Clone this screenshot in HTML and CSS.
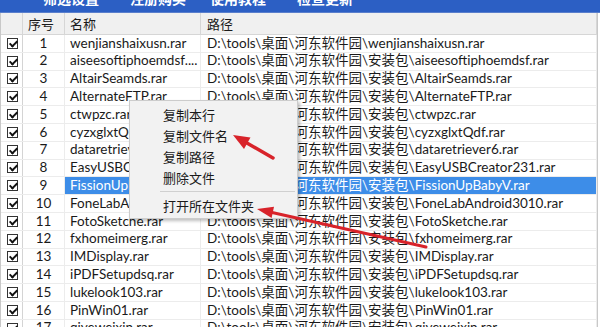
FILE: index.html
```html
<!DOCTYPE html>
<html lang="zh-CN">
<head>
  <meta charset="UTF-8" />
  <title>文件列表</title>
  <link rel="stylesheet" href="styles.css">
</head>
<body>
  <div class="topbar">
    <span class="nav nav-1">筛选设置</span>
    <span class="nav nav-2">注册购买</span>
    <span class="nav nav-3">使用教程</span>
    <span class="nav nav-4">检查更新</span>
  </div>

  <div class="list">
    <div class="row head">
      <div class="c-check"></div>
      <div class="c-num">序号</div>
      <div class="c-name">名称</div>
      <div class="c-path">路径</div>
    </div>

    <div class="row"><div class="c-check"><span class="cb"></span></div><div class="c-num">1</div><div class="c-name">wenjianshaixusn.rar</div><div class="c-path">D:\tools\桌面\河东软件园\wenjianshaixusn.rar</div></div>
    <div class="row"><div class="c-check"><span class="cb"></span></div><div class="c-num">2</div><div class="c-name">aiseesoftiphoemdsf....</div><div class="c-path">D:\tools\桌面\河东软件园\安装包\aiseesoftiphoemdsf.rar</div></div>
    <div class="row"><div class="c-check"><span class="cb"></span></div><div class="c-num">3</div><div class="c-name">AltairSeamds.rar</div><div class="c-path">D:\tools\桌面\河东软件园\安装包\AltairSeamds.rar</div></div>
    <div class="row"><div class="c-check"><span class="cb"></span></div><div class="c-num">4</div><div class="c-name">AlternateFTP.rar</div><div class="c-path">D:\tools\桌面\河东软件园\安装包\AlternateFTP.rar</div></div>
    <div class="row"><div class="c-check"><span class="cb"></span></div><div class="c-num">5</div><div class="c-name">ctwpzc.rar</div><div class="c-path">D:\tools\桌面\河东软件园\安装包\ctwpzc.rar</div></div>
    <div class="row"><div class="c-check"><span class="cb"></span></div><div class="c-num">6</div><div class="c-name">cyzxglxtQdf.rar</div><div class="c-path">D:\tools\桌面\河东软件园\安装包\cyzxglxtQdf.rar</div></div>
    <div class="row"><div class="c-check"><span class="cb"></span></div><div class="c-num">7</div><div class="c-name">dataretriever6.rar</div><div class="c-path">D:\tools\桌面\河东软件园\安装包\dataretriever6.rar</div></div>
    <div class="row"><div class="c-check"><span class="cb"></span></div><div class="c-num">8</div><div class="c-name">EasyUSBCreator231.rar</div><div class="c-path">D:\tools\桌面\河东软件园\安装包\EasyUSBCreator231.rar</div></div>
    <div class="row selected"><div class="c-check"><span class="cb"></span></div><div class="c-num">9</div><div class="c-name">FissionUpBabyV.rar</div><div class="c-path">D:\tools\桌面\河东软件园\安装包\FissionUpBabyV.rar</div></div>
    <div class="row"><div class="c-check"><span class="cb"></span></div><div class="c-num">10</div><div class="c-name">FoneLabAndroid3010.rar</div><div class="c-path">D:\tools\桌面\河东软件园\安装包\FoneLabAndroid3010.rar</div></div>
    <div class="row"><div class="c-check"><span class="cb"></span></div><div class="c-num">11</div><div class="c-name">FotoSketche.rar</div><div class="c-path">D:\tools\桌面\河东软件园\安装包\FotoSketche.rar</div></div>
    <div class="row"><div class="c-check"><span class="cb"></span></div><div class="c-num">12</div><div class="c-name">fxhomeimerg.rar</div><div class="c-path">D:\tools\桌面\河东软件园\安装包\fxhomeimerg.rar</div></div>
    <div class="row"><div class="c-check"><span class="cb"></span></div><div class="c-num">13</div><div class="c-name">IMDisplay.rar</div><div class="c-path">D:\tools\桌面\河东软件园\安装包\IMDisplay.rar</div></div>
    <div class="row"><div class="c-check"><span class="cb"></span></div><div class="c-num">14</div><div class="c-name">iPDFSetupdsq.rar</div><div class="c-path">D:\tools\桌面\河东软件园\安装包\iPDFSetupdsq.rar</div></div>
    <div class="row"><div class="c-check"><span class="cb"></span></div><div class="c-num">15</div><div class="c-name">lukelook103.rar</div><div class="c-path">D:\tools\桌面\河东软件园\安装包\lukelook103.rar</div></div>
    <div class="row"><div class="c-check"><span class="cb"></span></div><div class="c-num">16</div><div class="c-name">PinWin01.rar</div><div class="c-path">D:\tools\桌面\河东软件园\安装包\PinWin01.rar</div></div>
    <div class="row"><div class="c-check"><span class="cb"></span></div><div class="c-num">17</div><div class="c-name">qiyeweixin.rar</div><div class="c-path">D:\tools\桌面\河东软件园\安装包\qiyeweixin.rar</div></div>
  </div>

  <!-- 右键菜单 -->
  <div class="menu">
    <div class="menu-item">复制本行</div>
    <div class="menu-item">复制文件名</div>
    <div class="menu-item">复制路径</div>
    <div class="menu-item">删除文件</div>
    <div class="menu-sep"></div>
    <div class="menu-item">打开所在文件夹</div>
  </div>

  <!-- 标注箭头 -->
  <svg class="arrows" width="600" height="327" viewBox="0 0 600 327">
    <line x1="273" y1="158" x2="246" y2="142.5" stroke="#d8232a" stroke-width="3.5" stroke-linecap="round"/>
    <polygon points="233,135 250.5,137.5 244,149" fill="#d8232a"/>
    <line x1="426" y1="247" x2="271" y2="212.3" stroke="#d8232a" stroke-width="3" stroke-linecap="round"/>
    <polygon points="257,209 274,206.8 271.6,218" fill="#d8232a"/>
  </svg>
</body>
</html>
```

FILE: styles.css
```css
:root {
  --azul: #2c5fc4;
  --cinza-head: #f0f0f0;
  --linha: #ececec;
  --selecao: #3d8de8;
  --texto: #1a1a1a;
  --vermelho: #d8232a;
}

* {
  box-sizing: border-box;
}

body {
  margin: 0;
  width: 600px;
  height: 327px;
  overflow: hidden;
  font-family: Lato, "Noto Sans CJK SC", sans-serif;
  font-size: 13.5px;
  color: var(--texto);
  background: #ffffff;
  position: relative;
}

/* barra azul no topo (cortada) */
.topbar {
  height: 26px;
  margin-top: -13px;
  background: var(--azul);
  display: flex;
  align-items: center;
  border-bottom: 1px solid #5a7fcc;
}

.nav {
  color: #ffffff;
  font-weight: bold;
  font-size: 14px;
  font-family: "Noto Sans CJK SC", sans-serif;
  line-height: 24px;
  margin-top: -3px;
}

.nav-1 { margin-left: 43px; }
.nav-2 { margin-left: 31px; }
.nav-3 { margin-left: 24px; }
.nav-4 { margin-left: 31px; }

/* lista */
.list {
  width: 598px;
  border-left: 1px solid #c8c8c8;
  border-right: 1px solid #c8c8c8;
}

.row {
  display: grid;
  grid-template-columns: 22px 42px 136px 1fr;
  height: 17.8px;
  border-bottom: 1px solid var(--linha);
  white-space: nowrap;
}

.row > div {
  display: flex;
  align-items: center;
  overflow: hidden;
  border-right: 1px solid var(--linha);
  line-height: 1;
}

.row > .c-check {
  border-right-color: #d4d4d4;
  justify-content: center;
  padding-left: 1px;
}

.c-num {
  justify-content: center;
}

.c-name {
  padding-left: 5px;
}

.c-path {
  padding-left: 6px;
}

.row.head {
  height: 22px;
  background: var(--cinza-head);
  border-bottom: 1px solid #d6d6d6;
  font-family: "Noto Sans CJK SC", sans-serif;
  font-size: 13px;
}

.row.head > div {
  border-right: 1px solid #d6d6d6;
}

.row.head .c-num {
  justify-content: flex-start;
  padding-left: 5px;
}

.row.selected .c-path,
.row.selected .c-name {
  background: var(--selecao);
  color: #ffffff;
}

/* caixa de seleção */
.cb {
  width: 11px;
  height: 11px;
  border: 1px solid #333;
  background: #fff;
  position: relative;
}

.cb::after {
  content: "";
  position: absolute;
  left: 3px;
  top: 0px;
  width: 3px;
  height: 6px;
  border: solid #111;
  border-width: 0 2px 2px 0;
  transform: rotate(45deg);
}

/* menu de contexto */
.menu {
  position: absolute;
  left: 129px;
  top: 100px;
  width: 169px;
  padding: 3px 0 2px;
  background: #f2f2f2;
  border: 1px solid #cccccc;
  box-shadow: 2px 2px 3px rgba(0, 0, 0, 0.25);
  font-family: "Noto Sans CJK SC", sans-serif;
  font-size: 13px;
}

.menu-item {
  height: 21px;
  line-height: 21px;
  padding-left: 33px;
}

.menu-sep {
  height: 1px;
  margin: 3px 2px 3px 30px;
  background: #d0d0d0;
}

.arrows {
  position: absolute;
  left: 0;
  top: 0;
  pointer-events: none;
}
```
